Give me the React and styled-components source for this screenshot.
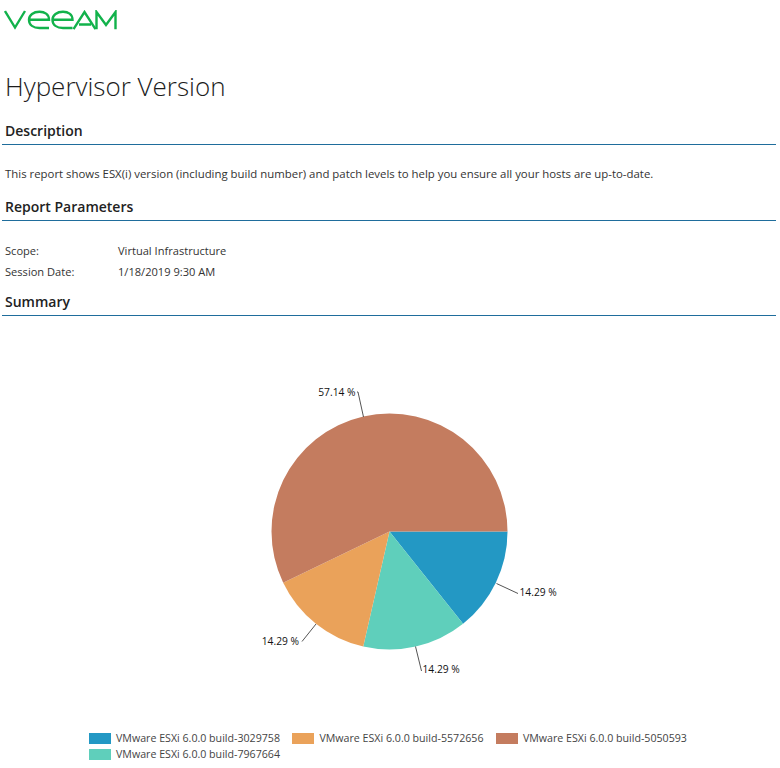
import React from "react";
import styled, { createGlobalStyle } from "styled-components";

const GlobalStyle = createGlobalStyle`
  html, body {
    margin: 0;
    padding: 0;
    background: #fff;
  }
  body {
    font-family: "Open Sans", "Noto Sans", sans-serif;
    color: #1f1f1f;
  }
`;

const Page = styled.div`
  width: 780px;
  height: 768px;
  overflow: hidden;
  padding: 10px 4px 0 2px;
  box-sizing: border-box;
`;

const LogoWrap = styled.div`
  height: 20px;
  padding-left: 2px;
`;

const Title = styled.h1`
  margin: 29px 0 7px 3px;
  font-size: 26px;
  line-height: 54px;
  font-weight: 300;
  color: #1c1c1c;
`;

const SectionHead = styled.h2`
  margin: ${(p) => p.$top || 0}px 0 0;
  padding: 1px 0 3px 3px;
  font-size: 14px;
  line-height: 20px;
  font-weight: 600;
  color: #222;
  border-bottom: 1px solid #1f6d9c;
`;

const Text = styled.p`
  margin: 19px 0 0 3px;
  font-size: 11.4px;
  line-height: 20px;
  color: #333;
`;

const Params = styled.div`
  display: grid;
  grid-template-columns: 113px 1fr;
  grid-auto-rows: 21px;
  margin: 19px 0 0 3px;
  font-size: 11.1px;
  line-height: 21px;
  color: #333;
`;

const ChartBox = styled.div`
  display: flex;
  justify-content: center;
  height: 344px;
  padding-top: 70px;
`;

const Legend = styled.div`
  display: grid;
  grid-template-columns: repeat(3, max-content);
  column-gap: 12.4px;
  grid-auto-rows: 16px;
  margin-left: 87px;
`;

const LegendItem = styled.div`
  display: flex;
  align-items: center;
  gap: 5px;
  font-size: 10.65px;
  line-height: 16px;
  color: #444;
`;

const Swatch = styled.span`
  width: 22px;
  height: 11px;
  background: ${(p) => p.$color};
`;

const Logo = () => (
  <svg width="113" height="20" viewBox="0 0 113 20" fill="none" stroke="#12b24b" strokeWidth="2.4">
    <path d="M1 1 L11 17.5 L21 1" />
    <path d="M25 9.7 H45 C45 4 40.5 1.8 35.5 1.8 C29.5 1.8 25 5 25 9.7 C25 15 29.5 18 35.5 18 H45" />
    <path d="M48.5 9.7 H68.5 C68.5 4 64 1.8 59 1.8 C53 1.8 48.5 5 48.5 9.7 C48.5 15 53 18 59 18 H68.5" />
    <path d="M69.5 19.2 L80.5 2 L91.5 19.2 M75 14.5 H87" />
    <path d="M92.5 19.2 V2 L102 15 L111.5 2 V19.2" />
  </svg>
);

const CX = 389.5;
const CY = 531.5;
const R = 118;

const point = (deg) => {
  const a = (deg * Math.PI) / 180;
  return [CX + R * Math.cos(a), CY + R * Math.sin(a)];
};

const slices = [
  { color: "#2398c4", from: 0, to: 51.43 },
  { color: "#5fcfbb", from: 51.43, to: 102.86 },
  { color: "#eaa25a", from: 102.86, to: 154.29 },
  { color: "#c47c5f", from: 154.29, to: 360 },
];

// page coordinates, the viewBox starts where the svg sits
const labels = [
  { text: "57.14 %", x: 355.5, y: 396, anchor: "end", line: "M 357 392 L 358 392 L 363.5 417" },
  { text: "14.29 %", x: 519.5, y: 596, anchor: "start", line: "M 496.5 583.5 L 518 593.5" },
  { text: "14.29 %", x: 422.5, y: 673, anchor: "start", line: "M 415.5 646.5 L 421.5 671" },
  { text: "14.29 %", x: 299, y: 645, anchor: "end", line: "M 316 624 L 302 641.5" },
];

const Pie = () => (
  <svg width="390" height="344" viewBox="194 386 390 344">
    {slices.map((s) => {
      const [x1, y1] = point(s.from);
      const [x2, y2] = point(s.to);
      const large = s.to - s.from > 180 ? 1 : 0;
      return (
        <path
          key={s.color}
          d={`M ${CX} ${CY} L ${x1} ${y1} A ${R} ${R} 0 ${large} 1 ${x2} ${y2} Z`}
          fill={s.color}
        />
      );
    })}
    {labels.map((l) => (
      <g key={l.line}>
        <path d={l.line} fill="none" stroke="#555" strokeWidth="1" />
        <text x={l.x} y={l.y} textAnchor={l.anchor} fontSize="10.25" fill="#111">
          {l.text}
        </text>
      </g>
    ))}
  </svg>
);

const legend = [
  { label: "VMware ESXi 6.0.0 build-3029758", color: "#2398c4" },
  { label: "VMware ESXi 6.0.0 build-5572656", color: "#eaa25a" },
  { label: "VMware ESXi 6.0.0 build-5050593", color: "#c47c5f" },
  { label: "VMware ESXi 6.0.0 build-7967664", color: "#5fcfbb" },
];

export default function App() {
  return (
    <Page>
      <GlobalStyle />
      <LogoWrap>
        <Logo />
      </LogoWrap>
      <Title>Hypervisor Version</Title>
      <SectionHead>Description</SectionHead>
      <Text>This report shows ESX(i) version (including build number) and patch levels to help you ensure all your hosts are up-to-date.</Text>
      <SectionHead $top={12}>Report Parameters</SectionHead>
      <Params>
        <span>Scope:</span>
        <span>Virtual Infrastructure</span>
        <span>Session Date:</span>
        <span>1/18/2019 9:30 AM</span>
      </Params>
      <SectionHead $top={9}>Summary</SectionHead>
      <ChartBox>
        <Pie />
      </ChartBox>
      <Legend>
        {legend.map((l) => (
          <LegendItem key={l.label}>
            <Swatch $color={l.color} />
            {l.label}
          </LegendItem>
        ))}
      </Legend>
    </Page>
  );
}
